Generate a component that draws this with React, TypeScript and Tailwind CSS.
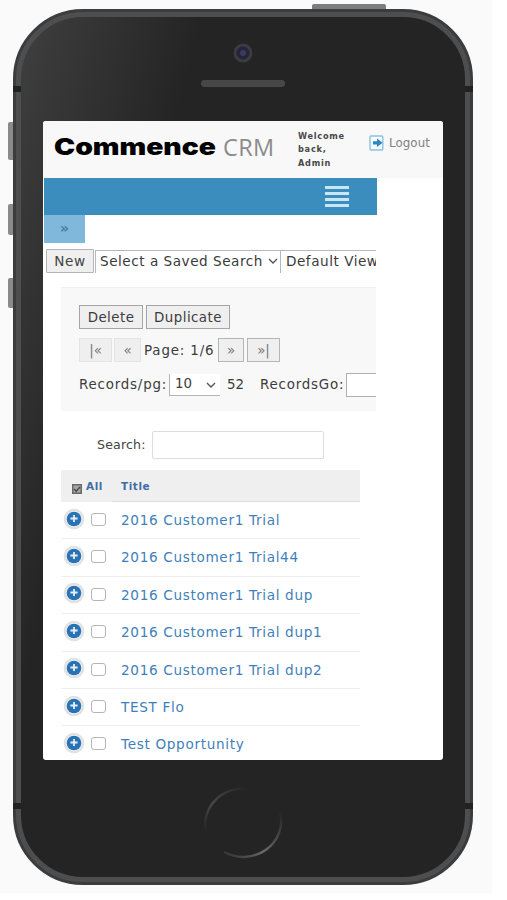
const records = [
  "2016 Customer1 Trial",
  "2016 Customer1 Trial44",
  "2016 Customer1 Trial dup",
  "2016 Customer1 Trial dup1",
  "2016 Customer1 Trial dup2",
  "TEST Flo",
  "Test Opportunity",
];

const Chevron = ({ className }: { className: string }) => (
  <svg viewBox="0 0 10 6" className={className} fill="none" stroke="#555" strokeWidth="1.4">
    <path d="M1 1l4 4 4-4" />
  </svg>
);

const PlusIcon = () => (
  <svg viewBox="0 0 22 22" className="h-[22px] w-[22px] shrink-0">
    <circle cx="11" cy="11" r="10.3" fill="#dfe1e2" />
    <circle cx="11" cy="11" r="8" fill="#eef3f7" />
    <circle cx="11" cy="11" r="7.3" fill="#2a73b3" />
    <path d="M11 7v7M7.4 10.5h7.2" stroke="#e4f0fa" strokeWidth="1.8" />
  </svg>
);

const LogoutIcon = () => (
  <svg viewBox="0 0 15 16" className="mt-[14px] ml-[22px] h-4 w-[15px] shrink-0">
    <rect x="1" y="1" width="12.8" height="14" rx="1" fill="#f4fafd" stroke="#8cc2e2" strokeWidth="1.4" />
    <path d="M4 6.3h4V3.6l5.6 4.2L8 12V9.5H4z" fill="#2d86bd" />
  </svg>
);

const Header = () => (
  <div className="flex h-[57px] items-start bg-[#f8f8f8]">
    <div className="mt-[11px] ml-[11px] w-[169px] shrink-0">
      <span className="inline-block origin-left scale-x-[1.23] font-['Inter'] text-[23px] leading-[30px] font-black text-black">
        Commence
      </span>
    </div>
    <span className="mt-[11px] w-[52px] shrink-0 font-['Open_Sans'] text-[23.5px] leading-[30px] tracking-[0.4px] text-[#8b8b8b]">CRM</span>
    <div className="mt-[9px] ml-[23px] w-[49px] shrink-0 text-[8.2px] leading-[13.4px] font-bold tracking-[0.75px] text-[#484848]">
      Welcome back, Admin
    </div>
    <LogoutIcon />
    <span className="mt-[14px] ml-[5px] text-[11.8px] leading-4 tracking-[0.1px] text-[#808080]">Logout</span>
  </div>
);

const Toolbar = () => (
  <div className="mt-1.5 ml-[3px] flex h-6 w-[330px] overflow-hidden text-[13.6px] text-[#3a3a3a]">
    <button className="h-6 w-12 shrink-0 rounded-[1px] border border-[#b5b5b5] bg-[#efefef] leading-[22px] tracking-[0.6px] text-[#444]">
      New
    </button>
    <div className="mt-px ml-px flex w-[186px] shrink-0 items-center border-x border-t border-[#b8b8b8] pb-0.5 pl-1">
      <span className="w-[164px] shrink-0 tracking-[0.52px] whitespace-nowrap">Select a Saved Search</span>
      <Chevron className="ml-1 h-1.5 w-2.5" />
    </div>
    <div className="mt-px flex shrink-0 items-center border-t border-[#b8b8b8] pb-0.5 pl-[5px] tracking-[0.52px] whitespace-nowrap">
      Default View
    </div>
  </div>
);

const ActionPanel = () => (
  <div className="mt-[14px] ml-[18px] h-[124px] w-[315px] overflow-hidden border-t border-[#f0f0f0] bg-[#f8f8f8] pt-[17px] pl-[18px] text-[13.4px] text-[#3c3c3c]">
    <div className="flex gap-[3px] leading-[24px] tracking-[0.45px]">
      <button className="h-6 w-16 border border-[#a5a5a5] bg-[#efefef]">Delete</button>
      <button className="h-6 w-[84px] border border-[#a5a5a5] bg-[#efefef]">Duplicate</button>
    </div>
    <div className="mt-[9px] flex leading-[23px] whitespace-nowrap">
      <button className="h-6 w-[33px] border border-[#e4e4e4] bg-[#efefef] text-[#777]">|«</button>
      <button className="ml-0.5 h-6 w-[27px] border border-[#e4e4e4] bg-[#efefef] text-[#777]">«</button>
      <span className="ml-[3px] w-[74px] shrink-0 leading-[26px] tracking-[0.85px]">Page: 1/6</span>
      <button className="h-6 w-[26px] border border-[#b5b5b5] bg-[#efefef] text-[#777]">»</button>
      <button className="ml-[3px] h-6 w-[33px] border border-[#b5b5b5] bg-[#efefef] text-[#777]">»|</button>
    </div>
    <div className="mt-[9px] flex h-6 items-center whitespace-nowrap">
      <span className="w-[90px] shrink-0 tracking-[0.8px]">Records/pg:</span>
      <div className="flex h-[22px] w-[51px] shrink-0 items-center justify-between border-b border-l border-[#b5b5b5] bg-white pr-1 pl-[5px]">
        10
        <Chevron className="h-1.5 w-2.5" />
      </div>
      <span className="ml-[7px] w-[33px] shrink-0">52</span>
      <span className="w-[86px] shrink-0 tracking-[0.8px]">RecordsGo:</span>
      <div className="h-6 w-[60px] shrink-0 border border-[#b0b0b0] bg-white" />
    </div>
  </div>
);

const RecordTable = () => (
  <div className="mt-[11px] ml-[18px] w-[299px]">
    <div className="flex h-8 bg-[#efefef] text-[10.4px] font-bold tracking-[0.6px] text-[#3d6ea3]">
      <svg viewBox="0 0 10 10" className="mt-[14px] ml-[11px] h-2.5 w-2.5 shrink-0">
        <rect width="10" height="10" fill="#686868" />
        <rect x="1.5" y="1.5" width="7" height="7" fill="#a5a5a5" />
        <path d="M2.2 5l2 2.2L8 3" fill="none" stroke="#444" strokeWidth="1.3" />
      </svg>
      <span className="ml-1 w-[26px] leading-8">All</span>
      <span className="flex-1 border-b border-[#dedede] pl-[9px] leading-8">Title</span>
    </div>
    {records.map((title) => (
      <div key={title} className="flex h-[37.4px] items-center border-b border-[#eeeeee]">
        <div className="mb-[3px] ml-0.5">
          <PlusIcon />
        </div>
        <span className="mb-[1.5px] ml-1.5 h-[13px] w-[15px] shrink-0 rounded-[3px] border border-[#b5b5b5] bg-white" />
        <a className="ml-[15px] text-[13.6px] tracking-[0.67px] whitespace-nowrap text-[#3f80ba]">{title}</a>
      </div>
    ))}
  </div>
);

const Screen = () => (
  <div className="h-[639px] w-[400px] overflow-hidden rounded-[3px] bg-white">
    <Header />
    <div className="ml-px flex h-[37px] w-[333px] flex-col items-end justify-center gap-[3.5px] bg-[#3b8dbd] pr-7">
      <span className="h-[2.5px] w-6 bg-[#c9e6f5]" />
      <span className="h-[2.5px] w-6 bg-[#c9e6f5]" />
      <span className="h-[2.5px] w-6 bg-[#c9e6f5]" />
      <span className="h-[2.5px] w-6 bg-[#c9e6f5]" />
    </div>
    <div className="ml-px h-7 w-[41px] bg-[#80b8dc] text-center text-[14px] leading-[26px] font-bold text-[#4d7c9b]">»</div>
    <Toolbar />
    <ActionPanel />
    <div className="mt-5 ml-[54px] flex h-7 items-center text-[12.6px] text-[#444]">
      <span className="w-[55px] tracking-[0.15px]">Search:</span>
      <div className="h-7 w-[172px] rounded-[2px] border border-[#dddddd] bg-white" />
    </div>
    <RecordTable />
  </div>
);

export default function App() {
  return (
    <div className="h-[900px] w-[507px] overflow-hidden bg-white font-['DejaVu_Sans',sans-serif]">
      <div className="relative h-[893px] w-[492px] bg-[#fafafa] pt-[9px] pl-[13px]">
        {/* side and power buttons */}
        <span className="absolute top-1 left-[312px] h-2 w-[74px] rounded-t-[2px] bg-[#7d7d7d]" />
        <span className="absolute top-[122px] left-2 h-[38px] w-2 rounded-l-[2px] bg-[#8a8a8a]" />
        <span className="absolute top-[204px] left-2 h-[31px] w-2 rounded-l-[2px] bg-[#8a8a8a]" />
        <span className="absolute top-[278px] left-2 h-[30px] w-2 rounded-l-[2px] bg-[#8a8a8a]" />

        <div className="relative h-[876px] w-[460px] rounded-[70px] border-[3px] border-[#3b3c3d] bg-[#3b3c3d]">
          <div className="h-full rounded-[67px] border-[5px] border-[#4c4e4f] bg-[linear-gradient(105deg,#3f3f3f_0%,#242424_27%)]">
            <div className="flex flex-col items-center">
              <svg viewBox="0 0 20 20" className="mt-[26px] h-5 w-5">
                <circle cx="10" cy="10" r="8" fill="#24243a" stroke="#3c3b40" strokeWidth="3" />
                <circle cx="10" cy="10" r="3" fill="#3d3a5e" />
              </svg>
              <span className="mt-[17px] h-[7px] w-[84px] rounded-full bg-[#474747]" />
            </div>
            <div className="mt-[34px] ml-[22px]">
              <Screen />
            </div>
            <svg viewBox="0 0 80 80" className="mx-auto mt-6 h-20 w-20" fill="none" strokeWidth="2.4">
              <defs>
                <linearGradient id="ringTop" x1="0" y1="1" x2="1" y2="0">
                  <stop offset="0" stopColor="#242424" />
                  <stop offset="0.4" stopColor="#484848" />
                  <stop offset="1" stopColor="#242424" />
                </linearGradient>
                <linearGradient id="ringBottom" x1="0" y1="1" x2="1" y2="0">
                  <stop offset="0" stopColor="#303030" />
                  <stop offset="0.4" stopColor="#696969" />
                  <stop offset="1" stopColor="#242424" />
                </linearGradient>
              </defs>
              <path d="M3 48A38 36 0 0 1 46 5" stroke="url(#ringTop)" />
              <path d="M21 68A38 36 0 0 0 77 28" stroke="url(#ringBottom)" />
            </svg>
          </div>
          {/* antenna gaps */}
          <span className="absolute top-[74px] -left-[3px] h-1.5 w-2 bg-[#222]" />
          <span className="absolute top-[74px] -right-[3px] h-1.5 w-2 bg-[#222]" />
          <span className="absolute top-[791px] -left-[3px] h-1.5 w-2 bg-[#222]" />
          <span className="absolute top-[791px] -right-[3px] h-1.5 w-2 bg-[#222]" />
        </div>
      </div>
    </div>
  );
}
